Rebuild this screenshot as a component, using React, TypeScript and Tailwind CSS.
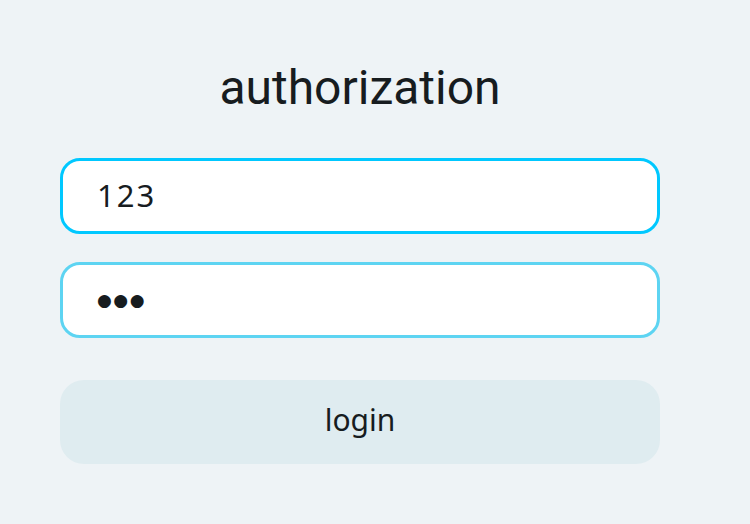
import React from "react";

export default function App() {
  return (
    <div className="w-[750px] h-[524px] bg-[#eef3f6] pl-[60px] pt-[58px]">
      <div className="w-[600px] flex flex-col items-center">
        <h1 className="font-['Roboto',sans-serif] text-[48px] leading-[60px] text-[#171c1f]">
          authorization
        </h1>
        <input
          defaultValue="123"
          className="mt-[40px] h-[76px] w-full rounded-[20px] border-[3px] border-[#00c8ff] bg-white pl-[34px] pb-[2px] font-['Noto_Sans',sans-serif] text-[31px] tracking-[2px] text-[#171c1f] outline-none"
        />
        <input
          readOnly
          defaultValue="●●●"
          className="mt-[28px] h-[76px] w-full rounded-[20px] border-[3px] border-[#5dd4f2] bg-white pl-[34px] font-['DejaVu_Sans',sans-serif] text-[17px] tracking-[1.5px] text-[#171c1f] outline-none"
        />
        <button className="mt-[42px] h-[84px] w-full rounded-[24px] bg-[#dfecf0] pb-[5px] font-['Noto_Sans',sans-serif] text-[30px] text-[#171c1f]">
          login
        </button>
      </div>
    </div>
  );
}
